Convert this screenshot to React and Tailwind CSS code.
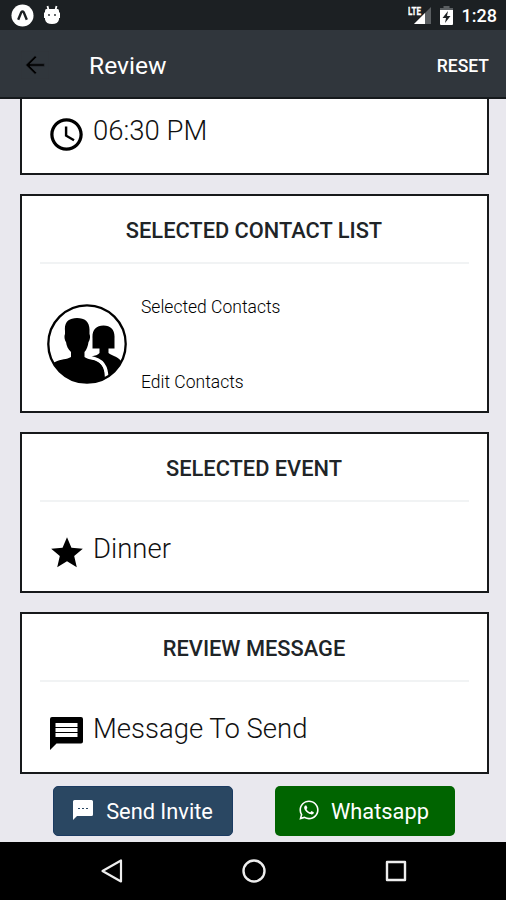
import { MdAccessTime, MdArrowBack, MdStar } from "react-icons/md";
import { FaWhatsapp } from "react-icons/fa";

const ContactsIcon = () => (
  <svg className="h-20 w-20 shrink-0" viewBox="0 0 80 80">
    <defs>
      <clipPath id="contacts-circle">
        <circle cx="40" cy="40" r="39" />
      </clipPath>
    </defs>
    <g clipPath="url(#contacts-circle)">
      <path d="M45.500 44.500V34C45 26 49 21.500 56.500 21.500S68 26 67.500 34V44.500H61.500V49C65 52 70 52 74 57L82 64V82H62C61 67 60 60 44.500 52.500C48 51.500 51 51 52.500 49V44.500Z" />
      <path d="M30 14C38 14 43 18 42.500 27V30C43.500 32 43 36 41.500 38C41 42 39.500 46 37.500 48V53C42 56 47 55 52 58.500C58 63 58 70 58 82H0V62L8 58C14 55 20 55.500 24 53V48C21 45 19.500 42 19 38C17.500 36 17 32 18 30V27C17 18 22 14 30 14Z" />
      <path d="M43.500 53.500C55 55 60.500 62 60 76" fill="none" stroke="#fff" strokeWidth="3" />
    </g>
    <circle cx="40" cy="40" r="38.700" fill="none" stroke="#000" strokeWidth="2.300" />
  </svg>
);

const MessageIcon = () => (
  <svg className="h-[33px] w-[33px]" viewBox="0 0 33 33">
    <path d="M2 0H31Q33 0 33 2V24.500Q33 26.500 31 26.500H6.500L0 33V2Q0 0 2 0Z" />
    <path d="M5.500 8H27.500M5.500 13H27.500M5.500 18H27.500" stroke="#fff" strokeWidth="4" />
  </svg>
);

const SmsIcon = () => (
  <svg className="h-5 w-5" viewBox="0 0 20 20">
    <path d="M1.500 0H18.500Q20 0 20 1.500V14.500Q20 16 18.500 16H4L0 20V1.500Q0 0 1.500 0Z" fill="#fff" />
    <path d="M5 8.500H7M9 8.500H11M13 8.500H15" stroke="#2a4762" strokeWidth="1.200" />
  </svg>
);

const StatusBar = () => (
  <div className="flex h-[30px] shrink-0 items-center bg-[#1c2023] pl-[11px] pr-[9px] text-white">
    <svg className="h-[23px] w-[23px]" viewBox="0 0 24 24">
      <circle cx="12" cy="12" r="11.500" fill="#fff" />
      <path d="M7.500 16.500 10.800 8.500Q12 7 13.200 8.500L16.500 16.500" fill="none" stroke="#1c2023" strokeWidth="2.500" />
    </svg>
    <svg className="ml-[9px] h-[20px] w-[18px]" viewBox="0 0 18 20">
      <path d="M4.500 1 5.500 5M13.500 1 12.500 5" stroke="#fff" strokeWidth="1.800" />
      <path d="M3.500 4H14.500Q16 4 16 6V7.500H17V13H16V14.500Q15 19 9 19T2 14.500V13H1V7.500H2V6Q2 4 3.500 4Z" fill="#fff" />
      <circle cx="6" cy="10" r=".9" fill="#1c2023" />
      <circle cx="12" cy="10" r=".9" fill="#1c2023" />
    </svg>
    <svg className="ml-auto h-[20px] w-[24px]" viewBox="0 0 24 20">
      <path d="M23 2V19H6Z" fill="#5b5f62" />
      <path d="M17 8V19H6Z" fill="#fff" />
      <path d="M0 0H13V10H0Z" fill="#1c2023" />
      <text x="0" y="9.500" fontSize="11" fontWeight="700" fill="#fff" stroke="#fff" strokeWidth=".3" textLength="13" lengthAdjust="spacingAndGlyphs">LTE</text>
    </svg>
    <svg className="ml-[8px] h-[19px] w-[13px]" viewBox="0 0 13 19">
      <path d="M3.500 0H9.500V2H13V5H0V2H3.500Z" fill="#5b5f62" />
      <path d="M0 4H13V18Q13 19 12 19H1Q0 19 0 18Z" fill="#fff" />
      <path d="M8 5 2.500 12H6L5 17 10.500 10H7Z" fill="#1c2023" />
    </svg>
    <span className="ml-[9px] mt-[2px] text-[18px] font-medium leading-none">1:28</span>
  </div>
);

const Card = ({ title, children }) => (
  <section className="mb-[19px] ml-[19.500px] mr-[17.500px] border-2 border-[#17191b] bg-white px-[18px]">
    <h2 className="flex h-[68px] items-center justify-center border-b-2 border-[#f1f3f4] pt-[5px] text-[21.800px] font-medium text-[#202427]">
      {title}
    </h2>
    {children}
  </section>
);

const Item = ({ icon, text }) => (
  <div className="flex items-start pl-[7px]">
    <span className="mt-[3px] flex h-10 w-10 items-center justify-center">{icon}</span>
    <span className="ml-[6.500px] text-[27.500px] font-light leading-[38px] text-[#111]">{text}</span>
  </div>
);

const App = () => {
  return (
    <div className="flex h-[900px] w-[506px] flex-col overflow-hidden bg-[#e9e8ee] font-[Roboto,sans-serif] text-black">
      <StatusBar />
      <header className="flex h-[69px] shrink-0 items-center border-b-2 border-[#15191c] bg-[#30363c] pl-[21px] pr-[17px] pt-[3px]">
        <MdArrowBack className="h-[28px] w-[28px]" stroke="#30363c" strokeWidth="0.5" />
        <h1 className="ml-[40px] mt-[2px] text-[24.600px] leading-none text-white">Review</h1>
        <button className="ml-auto mt-[3px] text-[17.500px] font-medium leading-none text-white">RESET</button>
      </header>

      <main className="flex-1">
        <section className="mb-[19px] ml-[19.500px] mr-[17.500px] h-[76px] border-2 border-t-0 border-[#17191b] bg-white px-[18px] pt-[12.500px]">
          <Item icon={<MdAccessTime size={39} />} text="06:30 PM" />
        </section>

        <Card title="SELECTED CONTACT LIST">
          <div className="flex h-[147px] items-center pl-[7px] pt-[13px]">
            <ContactsIcon />
            <div className="ml-[14.500px] mt-[2px] flex h-[98px] flex-col justify-between text-[17.500px] font-light leading-[23px]">
              <span>Selected Contacts</span>
              <span>Edit Contacts</span>
            </div>
          </div>
        </Card>

        <Card title="SELECTED EVENT">
          <div className="h-[89px] pt-[28px]">
            <Item icon={<MdStar size={38} />} text="Dinner" />
          </div>
        </Card>

        <Card title="REVIEW MESSAGE">
          <div className="h-[90px] pt-[28px]">
            <Item icon={<MessageIcon />} text="Message To Send" />
          </div>
        </Card>

        <div className="-mt-[7px] flex gap-[42px] pl-[53px]">
          <button className="flex h-[50px] w-[180px] items-center justify-center rounded-[5px] border border-[#1b3b62] bg-[#2a4762] text-[21.800px] text-white">
            <span className="-mt-[2px] mr-[13px]">
              <SmsIcon />
            </span>
            <span className="mt-[2px]">Send Invite</span>
          </button>
          <button className="flex h-[50px] w-[180px] items-center justify-center rounded-[5px] bg-[#006400] pr-[3px] text-[21.800px] text-white">
            <FaWhatsapp className="-mt-[2px] mr-[11px] h-[22px] w-[22px]" />
            <span className="mt-[2px]">Whatsapp</span>
          </button>
        </div>
      </main>

      <nav className="flex h-[58px] shrink-0 items-center bg-black pl-[101px]">
        <svg className="h-6 w-6" viewBox="0 0 24 24" fill="none" stroke="#eee" strokeWidth="2.200" strokeLinejoin="round">
          <path d="M1.500 12 20 1.500V22.500Z" />
        </svg>
        <svg className="ml-[117px] h-6 w-6" viewBox="0 0 24 24" fill="none" stroke="#eee" strokeWidth="2.400">
          <circle cx="12" cy="12" r="10.500" />
        </svg>
        <svg className="ml-[118px] h-6 w-6" viewBox="0 0 24 24" fill="none" stroke="#eee" strokeWidth="2.400" strokeLinejoin="round">
          <path d="M3 3H21V21H3Z" />
        </svg>
      </nav>
    </div>
  );
};

export default App;
